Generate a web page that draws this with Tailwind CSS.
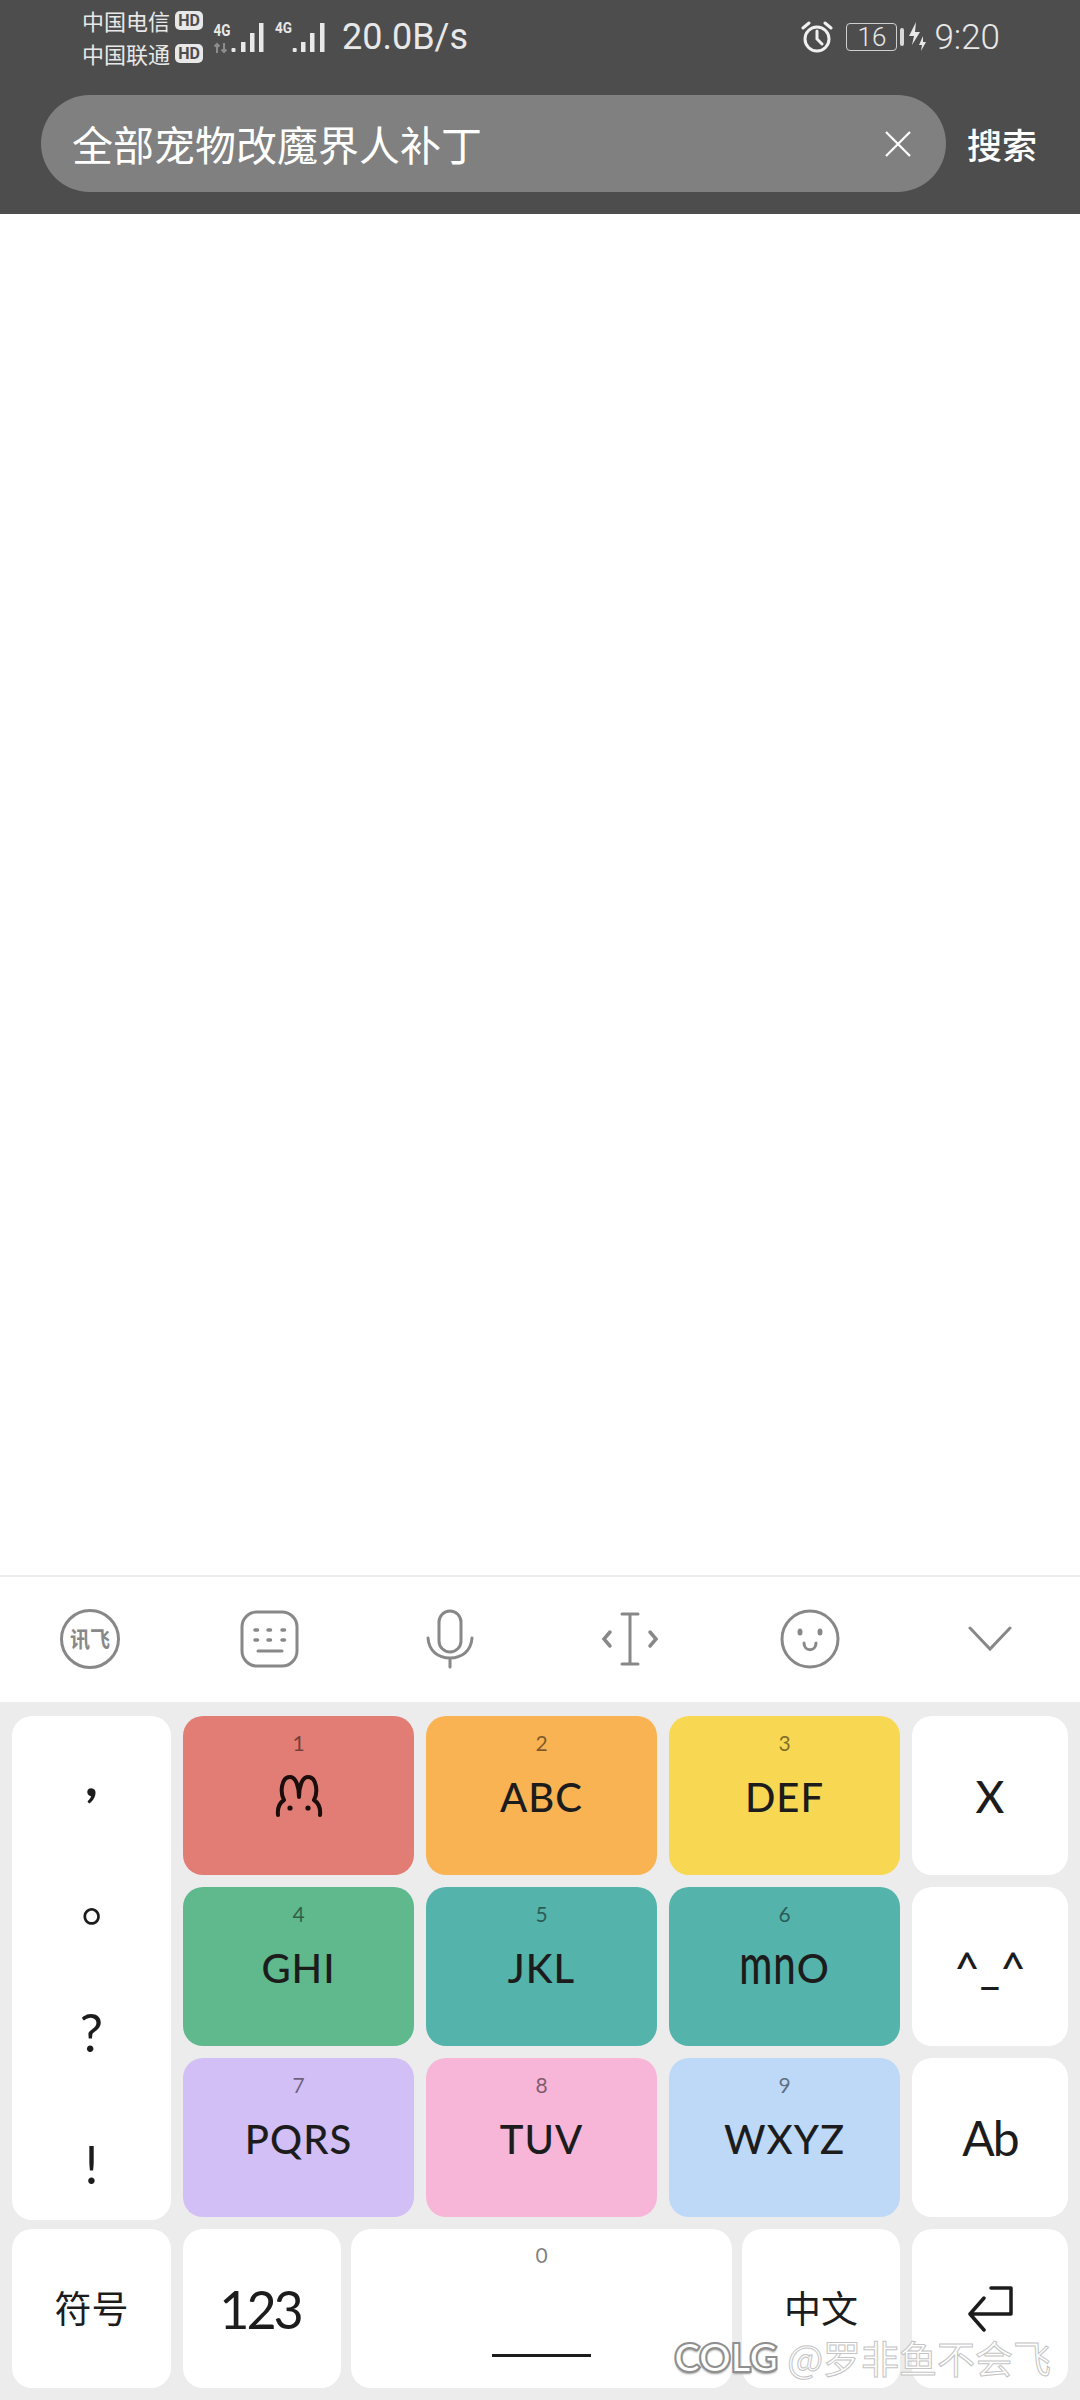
<!DOCTYPE html>
<html lang="zh-CN">
<head>
    <meta charset="UTF-8">
    <meta name="viewport" content="width=device-width, initial-scale=1.0">
    <title>Search</title>
    <script src="https://cdn.jsdelivr.net/npm/@tailwindcss/browser@4"></script>
</head>
<body class="bg-white">
<div class="relative w-[1080px] h-[2400px] overflow-hidden flex flex-col [font-family:'Noto_Sans_CJK_SC',sans-serif]">

    <!-- status bar + search -->
    <header class="h-[214px] shrink-0 bg-[#4d4d4d] pt-[4px]">
        <div class="flex items-center h-[66px] pl-[82px] pr-[80px] text-[#e8e8e8]">
            <div class="flex flex-col w-[121px] shrink-0">
                <div class="flex items-center h-[33px]">
                    <span class="text-[22px] leading-[33px] w-[93px] whitespace-nowrap">中国电信</span>
                    <span class="w-[28px] h-[19px] rounded-[5px] bg-[#e8e8e8] text-[#4d4d4d] text-[16px] leading-[19px] font-bold text-center [font-family:'Roboto',sans-serif]">HD</span>
                </div>
                <div class="flex items-center h-[33px]">
                    <span class="text-[22px] leading-[33px] w-[93px] whitespace-nowrap">中国联通</span>
                    <span class="w-[28px] h-[19px] rounded-[5px] bg-[#e8e8e8] text-[#4d4d4d] text-[16px] leading-[19px] font-bold text-center [font-family:'Roboto',sans-serif]">HD</span>
                </div>
            </div>
            <svg class="ml-[10px] shrink-0" width="113" height="40" viewBox="213 16 113 40" fill="#e8e8e8">
                <text x="213.500" y="35" font-family="Roboto" font-weight="700" font-size="16" textLength="17" lengthAdjust="spacingAndGlyphs">4G</text>
                <path d="M217 52v-9m-2.500 2.500l2.500-2.500 2.500 2.500M224 42v9m-2.500-2.500l2.500 2.500 2.500-2.500" stroke="#8c8c8c" stroke-width="2" fill="none"/>
                <rect x="231.500" y="47" width="4" height="4" rx="1"/>
                <rect x="241" y="41" width="4.500" height="10"/>
                <rect x="250" y="32" width="4.500" height="19"/>
                <rect x="259" y="22" width="4.500" height="29"/>
                <text x="275" y="32" font-family="Roboto" font-weight="700" font-size="15" textLength="17" lengthAdjust="spacingAndGlyphs">4G</text>
                <rect x="292.700" y="47" width="4" height="4" rx="1"/>
                <rect x="301" y="41" width="4.500" height="10"/>
                <rect x="310" y="32" width="4.500" height="19"/>
                <rect x="320" y="22" width="4.500" height="29"/>
            </svg>
            <span class="ml-[16px] text-[36px] leading-none [font-family:'Roboto',sans-serif] whitespace-nowrap">20.0B/s</span>

            <div class="ml-auto flex items-center">
                <svg width="32" height="34" viewBox="0 0 32 34" fill="none" stroke="#f0f0f0" stroke-width="3" stroke-linecap="round">
                    <circle cx="16" cy="19" r="12"/>
                    <path d="M16 11v8l5 5M2 8l6-5M30 8l-6-5"/>
                </svg>
                <div class="ml-[13px] w-[51px] h-[28px] rounded-[4px] border border-[#cfcfcf] text-center text-[26px] leading-[26px] font-light [font-family:'Roboto',sans-serif]">16</div>
                <div class="ml-[3px] w-[4px] h-[18px] rounded-[2px] bg-[#d8d8d8]"></div>
                <svg class="ml-[4px]" width="18" height="30" viewBox="0 0 18 30" fill="#e8e8e8">
                    <path d="M8 0L1 14h5L4 23l8-13H7zM15 14l-4 9h3l-1 6 5-9h-3z"/>
                </svg>
                <span class="ml-[8px] text-[35px] leading-none font-light [font-family:'Roboto',sans-serif]">9:20</span>
            </div>
        </div>

        <div class="flex items-center mt-[25px] pl-[41px]">
            <div class="flex items-center justify-between w-[905px] h-[97px] rounded-full bg-[#808080] pl-[31px] pr-[35px]">
                <span class="text-[41px] leading-none text-white whitespace-nowrap">全部宠物改魔界人补丁</span>
                <svg width="26" height="26" viewBox="0 0 26 26" stroke="#fff" stroke-width="2.200" fill="none">
                    <path d="M1 1l24 24M25 1L1 25"/>
                </svg>
            </div>
            <span class="ml-[21px] text-[35px] leading-none font-medium text-white whitespace-nowrap">搜索</span>
        </div>
    </header>

    <!-- empty results -->
    <main class="flex-1 bg-white"></main>

    <!-- keyboard toolbar -->
    <div class="h-[127px] shrink-0 bg-white border-t-2 border-[#eeeeee] grid grid-cols-6 place-items-center pb-[2px]">
        <svg width="60" height="60" viewBox="0 0 60 60" fill="none" stroke="#888" stroke-width="3">
            <circle cx="30" cy="30" r="28.500"/>
            <text x="30" y="38" text-anchor="middle" font-family="Noto Sans CJK SC" font-size="22" font-weight="700" fill="#888" stroke="none" textLength="40" lengthAdjust="spacingAndGlyphs">讯飞</text>
        </svg>
        <svg width="60" height="60" viewBox="0 0 60 60" fill="none" stroke="#888" stroke-width="3" stroke-linecap="round">
            <rect x="2" y="3" width="55" height="54" rx="15"/>
            <path d="M15 21h2.500M28 21h2.500M42 21h2.500M15 31h2.500M28 31h2.500M42 31h2.500" stroke-width="3.500"/>
            <path d="M18 42h24"/>
        </svg>
        <svg width="60" height="60" viewBox="0 0 60 60" fill="none" stroke="#888" stroke-width="3" stroke-linecap="round">
            <rect x="19" y="2" width="22" height="41" rx="11"/>
            <path d="M8 29c1 13 10 20 22 20s21-7 22-20M30 49v9"/>
        </svg>
        <svg width="60" height="60" viewBox="0 0 60 60" fill="none" stroke="#888" stroke-width="3" stroke-linecap="round">
            <path d="M22 5h16M22 55h16M30 5v50"/>
            <path d="M10 23l-6 7 6 7M50 23l6 7-6 7" stroke-width="3.500"/>
        </svg>
        <svg width="60" height="60" viewBox="0 0 60 60" fill="none" stroke="#888" stroke-width="3" stroke-linecap="round">
            <circle cx="30" cy="30" r="28"/>
            <ellipse cx="20" cy="23" rx="2.500" ry="3.500" fill="#888" stroke="none"/>
            <ellipse cx="40" cy="23" rx="2.500" ry="3.500" fill="#888" stroke="none"/>
            <path d="M24 34c0 9 12 9 12 0"/>
        </svg>
        <svg width="44" height="26" viewBox="0 0 44 26" fill="none" stroke="#888" stroke-width="3" stroke-linecap="round">
            <path d="M2 2l20 21L42 2"/>
        </svg>
    </div>

    <!-- keyboard -->
    <div class="h-[698px] shrink-0 bg-[#ececec] pt-[14px] pl-[12px] text-[#1c1c1c] [font-family:'Lato','Noto_Sans_CJK_SC',sans-serif]">
        <div class="flex h-[513px]">
            <div class="w-[159px] h-[504px] rounded-[20px] bg-white flex flex-col items-center text-[52px] leading-[60px]">
                <span class="mt-[30px] h-[60px] font-black">,</span>
                <span class="mt-[78px] h-[60px] text-[54px] [font-family:'Noto_Sans_CJK_TC',sans-serif]">。</span>
                <span class="mt-[58px] h-[60px]">?</span>
                <span class="mt-[72px] h-[60px]">!</span>
            </div>

            <div class="ml-[12px] grid grid-cols-[231px_231px_231px_156px] grid-rows-[159px_159px_159px] gap-x-[12px] gap-y-[12px]">
                <div class="rounded-[20px] bg-[#e27d75] flex flex-col items-center pt-[15px]">
                    <span class="text-[21px] leading-[24px] text-black/50">1</span>
                    <svg class="mt-[19px]" width="48" height="44" viewBox="0 0 48 44" fill="none" stroke="#1a0d0c" stroke-width="4" stroke-linecap="round" stroke-linejoin="round">
                        <path d="M3 41c-1-9 3-13 6-15C5 19 6 3 15 3c6 0 9 10 9 20 0-10 3-20 9-20 9 0 10 16 6 23 3 2 7 6 6 15"/>
                        <circle cx="15" cy="34" r="2.600" fill="#1a0d0c" stroke="none"/>
                        <circle cx="33" cy="34" r="2.600" fill="#1a0d0c" stroke="none"/>
                    </svg>
                </div>
                <div class="rounded-[20px] bg-[#f9b353] flex flex-col items-center pt-[15px]">
                    <span class="text-[21px] leading-[24px] text-black/50">2</span>
                    <span class="mt-[22px] text-[40px] leading-[40px] font-medium tracking-[1px]">ABC</span>
                </div>
                <div class="rounded-[20px] bg-[#f8d752] flex flex-col items-center pt-[15px]">
                    <span class="text-[21px] leading-[24px] text-black/50">3</span>
                    <span class="mt-[22px] text-[40px] leading-[40px] font-medium tracking-[1px]">DEF</span>
                </div>
                <div class="rounded-[20px] bg-white flex items-center justify-center text-[44px] font-medium">X</div>

                <div class="rounded-[20px] bg-[#5fb98d] flex flex-col items-center pt-[15px]">
                    <span class="text-[21px] leading-[24px] text-black/50">4</span>
                    <span class="mt-[22px] text-[40px] leading-[40px] font-medium tracking-[1px]">GHI</span>
                </div>
                <div class="rounded-[20px] bg-[#54b3ab] flex flex-col items-center pt-[15px]">
                    <span class="text-[21px] leading-[24px] text-black/50">5</span>
                    <span class="mt-[22px] text-[40px] leading-[40px] font-medium tracking-[1px]">JKL</span>
                </div>
                <div class="rounded-[20px] bg-[#54b3ab] flex flex-col items-center pt-[15px]">
                    <span class="text-[21px] leading-[24px] text-black/50">6</span>
                    <span class="mt-[22px] text-[40px] leading-[40px] font-medium tracking-[1px]"><span class="inline-block origin-[50%_79%] scale-y-[1.4]">mn</span>O</span>
                </div>
                <div class="rounded-[20px] bg-white flex items-center justify-center text-[44px] font-medium">^_^</div>

                <div class="rounded-[20px] bg-[#d2bff6] flex flex-col items-center pt-[15px]">
                    <span class="text-[21px] leading-[24px] text-black/50">7</span>
                    <span class="mt-[22px] text-[40px] leading-[40px] font-medium tracking-[1px]">PQRS</span>
                </div>
                <div class="rounded-[20px] bg-[#f7b6d7] flex flex-col items-center pt-[15px]">
                    <span class="text-[21px] leading-[24px] text-black/50">8</span>
                    <span class="mt-[22px] text-[40px] leading-[40px] font-medium tracking-[1px]">TUV</span>
                </div>
                <div class="rounded-[20px] bg-[#bdd9f7] flex flex-col items-center pt-[15px]">
                    <span class="text-[21px] leading-[24px] text-black/50">9</span>
                    <span class="mt-[22px] text-[40px] leading-[40px] font-medium tracking-[1px]">WXYZ</span>
                </div>
                <div class="rounded-[20px] bg-white flex items-center justify-center text-[48px] tracking-[-2px]">Ab</div>
            </div>
        </div>

        <div class="flex h-[159px]">
            <div class="w-[159px] rounded-[20px] bg-white flex items-center justify-center text-[37px]">符号</div>
            <div class="ml-[12px] w-[158px] rounded-[20px] bg-white flex items-center justify-center text-[52px] tracking-[-3px] pr-[4px]">123</div>
            <div class="ml-[10px] w-[381px] rounded-[20px] bg-white flex flex-col items-center pt-[14px]">
                <span class="text-[21px] leading-[24px] text-black/50">0</span>
                <div class="mt-[87px] w-[99px] h-[3px] bg-[#1c1c1c]"></div>
            </div>
            <div class="ml-[10px] w-[158px] rounded-[20px] bg-white flex items-center justify-center text-[37px]">中文</div>
            <div class="ml-[12px] w-[156px] rounded-[20px] bg-white flex items-center justify-center">
                <svg width="46" height="46" viewBox="0 0 46 46" fill="none" stroke="#1c1c1c" stroke-width="3.500" stroke-linecap="round" stroke-linejoin="round">
                    <path d="M24 2h20v26H3M17 12L3 28l14 16"/>
                </svg>
            </div>
        </div>
    </div>

    <!-- watermark -->
    <div class="absolute left-[674px] top-[2337px] flex items-center whitespace-nowrap text-white">
        <span class="text-[40px] leading-none font-black tracking-[-1px] [font-family:'Lato',sans-serif] [-webkit-text-stroke:2px_#8f8f8f] [text-shadow:0_2px_2px_#999]">COLG</span>
        <span class="ml-[10px] text-[38px] leading-none [-webkit-text-stroke:1px_#c4c4c4]">@罗非鱼不会飞</span>
    </div>
</div>
</body>
</html>
